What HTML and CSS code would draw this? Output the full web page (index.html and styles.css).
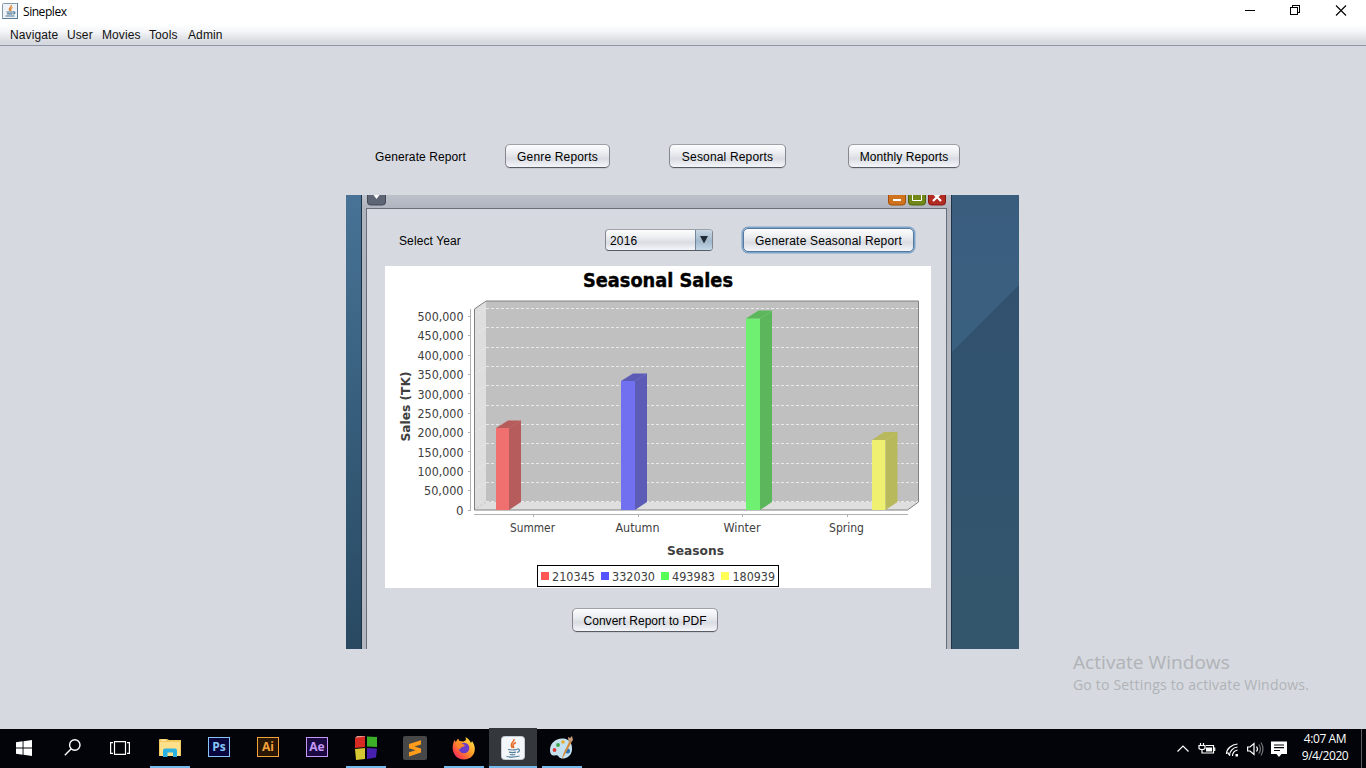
FILE: index.html
```html
<!DOCTYPE html>
<html lang="en">
<head>
<meta charset="utf-8">
<title>Sineplex</title>
<link rel="stylesheet" href="styles.css">
</head>
<body>
<header class="titlebar">
  <svg class="app-icon" width="16" height="16" viewBox="0 0 16 16"><rect x=".5" y=".5" width="15" height="15" rx="1" fill="#eef2f6" stroke="#8099ad"/><path d="M0 15.500h16M15.500 0v16" stroke="#5b7c95"/><path d="M9.400 2C10 4 6 4.700 7.600 7.800M10.500 4.500C8.500 5.500 8.200 6 9 8" fill="none" stroke="#e08030" stroke-width="1.300"/><path d="M4.500 9h6.500M5 10.800h5.500M3.500 13h9M11 9c2.500-.5 2.500 1.500 0 2" fill="none" stroke="#4f7896" stroke-width="1.200"/></svg>
  <span class="app-name">Sineplex</span>
  <svg class="win-ctl" width="106" height="12" viewBox="1243 5 106 12" fill="none" stroke="#000"><path d="M1245 10.500h10M1290.500 7.500h7v7h-7zM1292.500 7.500v-2h7v7h-2" shape-rendering="crispEdges"/><path d="M1336 5.500l10 10M1346 5.500l-10 10" stroke-width="1.100"/></svg>
</header>
<nav class="menubar">
  <span class="m1">Navigate</span><span class="m2">User</span><span class="m3">Movies</span><span class="m4">Tools</span><span class="m5">Admin</span>
</nav>
<main class="content">
  <div class="report-row">
    <span class="label">Generate Report</span>
    <button class="btn genre">Genre Reports</button>
    <button class="btn sesonal">Sesonal Reports</button>
    <button class="btn monthly">Monthly Reports</button>
  </div>
  <section class="desktop">
    <svg class="wall" width="15" height="454"><defs><linearGradient id="lw" x2="0" y2="1"><stop offset="0" stop-color="#487396"/><stop offset=".5" stop-color="#365d7b"/><stop offset="1" stop-color="#294961"/></linearGradient></defs><rect width="15" height="454" fill="url(#lw)"/></svg>
    <div class="frame">
      <div class="frame-title">
        <svg width="20" height="11" viewBox="0 0 20 11"><path d="M.5-2V7a3 3 0 0 0 3 3h12a3 3 0 0 0 3-3V-2z" fill="#5e6676" stroke="#414857"/><path d="M6.500 0h6L9.500 4z" fill="#fff"/></svg>
        <svg class="frame-ctl" width="59" height="11" viewBox="0 0 59 11">
          <path d="M.5-2V7a3 3 0 0 0 3 3h11a3 3 0 0 0 3-3V-2z" fill="#cf731c" stroke="#a64e09"/><path d="M5 5h8" stroke="#fff" stroke-width="2"/>
          <path d="M20.500-2V7a3 3 0 0 0 3 3h11a3 3 0 0 0 3-3V-2z" fill="#718717" stroke="#50650a"/><path d="M24.500-2V5.500h9V-2" fill="none" stroke="#fff"/>
          <path d="M40.500-2V7a3 3 0 0 0 3 3h11a3 3 0 0 0 3-3V-2z" fill="#b22c24" stroke="#871711"/><path d="M45 6l8-8M45-2l8 8" stroke="#fff" stroke-width="2.200"/>
        </svg>
      </div>
      <div class="frame-body">
        <div class="year-row">
          <span class="label year">Select Year</span>
          <div class="combo"><span class="combo-val">2016</span><span class="combo-arrow"><svg width="8" height="8"><path d="M0 0h8L4 7.500z" fill="#222a33"/></svg></span></div>
          <button class="btn focus seasonal">Generate Seasonal Report</button>
        </div>
        <svg class="chart" width="546" height="322" viewBox="385 266 546 322">
          <rect x="385" y="266" width="546" height="322" fill="#fff"/>
          <text class="c-title" x="583" y="287" textLength="150" lengthAdjust="spacingAndGlyphs">Seasonal Sales</text>
          <path d="M474 309l12-8v201l-12 8zM474 510l12-8h433l-11.500 8z" fill="#dedede"/>
          <path d="M486 301h433v201H486z" fill="#c0c0c0"/>
          <path d="M474 510l12-8" stroke="#c0c0c0" stroke-dasharray="2 2"/>
          <path class="grid" d="M486 308.500h433M486 327.500h433M486 347.500h433M486 366.500h433M486 385.500h433M486 405.500h433M486 424.500h433M486 443.500h433M486 463.500h433M486 482.500h433M486 501.500h433"/>
          <path class="grid" d="M474 316.500l12-8M474 335.500l12-8M474 355.500l12-8M474 374.500l12-8M474 393.500l12-8M474 413.500l12-8M474 432.500l12-8M474 451.500l12-8M474 471.500l12-8M474 490.500l12-8"/>
          <path d="M474.500 510V309l11.500-8h432.500V502l-11 8z" fill="none" stroke="#808080"/>
          <g><path fill="#f07070" d="M496 428h13v82h-13z"/><path fill="#b75c5c" d="M496 428l12-7.500h13V502l-12 8v-82z"/><path d="M509 428l12-7.500" stroke="#c56b6b" stroke-width=".6"/></g>
          <g><path fill="#7070f0" d="M621 381h14v129h-14z"/><path fill="#5c5cb7" d="M621 381l12-7.500h14V502l-12 8V381z"/><path d="M635 381l12-7.500" stroke="#7474c5" stroke-width=".6"/></g>
          <g><path fill="#70f070" d="M746 318.500h14V510h-14z"/><path fill="#5cb75c" d="M746 318.500l12.500-8H772V502l-12 8V318.500z"/><path d="M760 318.500l12-8" stroke="#78c578" stroke-width=".6"/></g>
          <g><path fill="#f0f070" d="M872 440h13.500v70H872z"/><path fill="#b8b85c" d="M872 440l12-8h13.500v70l-12 8v-70z"/><path d="M885.500 440l12-8" stroke="#c3c372" stroke-width=".6"/></g>
          <path d="M470.500 309v201.500M468 316.500h3M468 335.500h3M468 355.500h3M468 374.500h3M468 393.500h3M468 413.500h3M468 432.500h3M468 451.500h3M468 471.500h3M468 490.500h3M468 510.500h3M474 514.500h434M533.500 514v3M638.500 514v3M742.500 514v3M847.500 514v3" fill="none" stroke="#b0b0b0"/>
          <g class="c-tick c-num">
            <text x="417.500" y="321" textLength="46" lengthAdjust="spacingAndGlyphs">500,000</text><text x="417.500" y="340" textLength="46" lengthAdjust="spacingAndGlyphs">450,000</text><text x="417.500" y="360" textLength="46" lengthAdjust="spacingAndGlyphs">400,000</text><text x="417.500" y="379" textLength="46" lengthAdjust="spacingAndGlyphs">350,000</text><text x="417.500" y="399" textLength="46" lengthAdjust="spacingAndGlyphs">300,000</text><text x="417.500" y="418" textLength="46" lengthAdjust="spacingAndGlyphs">250,000</text><text x="417.500" y="437" textLength="46" lengthAdjust="spacingAndGlyphs">200,000</text><text x="417.500" y="457" textLength="46" lengthAdjust="spacingAndGlyphs">150,000</text><text x="417.500" y="476" textLength="46" lengthAdjust="spacingAndGlyphs">100,000</text><text x="424" y="495" textLength="39.500" lengthAdjust="spacingAndGlyphs">50,000</text><text x="456" y="515" textLength="7.500" lengthAdjust="spacingAndGlyphs">0</text>
          </g>
          <g class="c-tick">
            <text x="510" y="532" textLength="45" lengthAdjust="spacingAndGlyphs">Summer</text><text x="615.500" y="532" textLength="44" lengthAdjust="spacingAndGlyphs">Autumn</text><text x="723.500" y="532" textLength="37" lengthAdjust="spacingAndGlyphs">Winter</text><text x="829" y="532" textLength="35" lengthAdjust="spacingAndGlyphs">Spring</text>
          </g>
          <text class="c-axis" x="667" y="555" textLength="57" lengthAdjust="spacingAndGlyphs">Seasons</text>
          <text class="c-axis" transform="translate(410 441.500) rotate(-90)" textLength="70" lengthAdjust="spacingAndGlyphs">Sales (TK)</text>
          <rect x="537.500" y="565.500" width="241" height="21" fill="#fff" stroke="#000"/>
          <path fill="#ff5555" d="M541 572h8v8h-8z"/><path fill="#5555ff" d="M601 572h8v8h-8z"/><path fill="#55ff55" d="M661 572h8v8h-8z"/><path fill="#ffff55" d="M721 572h8v8h-8z"/>
          <g class="c-tick c-num"><text x="552" y="581" textLength="43" lengthAdjust="spacingAndGlyphs">210345</text><text x="612" y="581" textLength="43" lengthAdjust="spacingAndGlyphs">332030</text><text x="672" y="581" textLength="43" lengthAdjust="spacingAndGlyphs">493983</text><text x="732.500" y="581" textLength="42.500" lengthAdjust="spacingAndGlyphs">180939</text></g>
        </svg>
        <button class="btn convert">Convert Report to PDF</button>
      </div>
    </div>
    <svg class="wall" width="67" height="454"><defs><linearGradient id="rw" x2="0" y2="1"><stop offset="0" stop-color="#3a5d7e"/><stop offset=".35" stop-color="#3a607f"/><stop offset="1" stop-color="#34566f"/></linearGradient><linearGradient id="rd" x2="0" y2="1"><stop offset="0" stop-color="#31516f"/><stop offset="1" stop-color="#34566c"/></linearGradient></defs><rect width="67" height="454" fill="url(#rw)"/><path d="M0 157L67 90v364H0z" fill="url(#rd)"/></svg>
  </section>
  <aside class="activate"><div class="act-1">Activate Windows</div><div class="act-2">Go to Settings to activate Windows.</div></aside>
</main>
<footer class="taskbar">
  <div class="task"><svg width="16" height="16" fill="#fff"><path d="M0 2.300l6.600-1v6.200H0zM7.500 1.200L16 0v7.500H7.500zM0 8.400h6.600v6.300L0 13.700zM7.500 8.400H16V16l-8.500-1.200z"/></svg></div>
  <div class="task"><svg width="17" height="17" fill="none" stroke="#fff" stroke-width="1.400"><circle cx="10.800" cy="6" r="5.200"/><path d="M7 10L.8 16.200"/></svg></div>
  <div class="task view"><svg width="20" height="14" fill="none" stroke="#fff" stroke-width="1.200"><path d="M4.500.6h11v12.800h-11zM3 1.600H.6v10.800H3M17 1.600h2.400v10.800H17"/></svg></div>
  <div class="task open explorer"><svg width="22" height="19" viewBox="0 0 22 19"><path d="M0 1q0-1 1-1h7l2 1h12v16H0z" fill="#efc95d"/><path d="M1 3h20v14H1z" fill="#ffe08a"/><path d="M2 1.200h5" stroke="#fff6d0"/><path d="M4 18V11.500q0-2 2-2h10q2 0 2 2V18h-4v-4.500H8.500V18z" fill="#29b2e2"/></svg></div>
  <div class="task"><span class="adobe ps">Ps</span></div>
  <div class="task"><span class="adobe ai">Ai</span></div>
  <div class="task"><span class="adobe ae">Ae</span></div>
  <div class="task open"><svg width="22" height="24" viewBox="0 0 22 24"><path d="M0 2l10-2v11L0 12z" fill="#d72b22"/><path d="M0 2l2-2h8v.5z" fill="#f0968a"/><path d="M12 .5L22 1v10l-10-.5z" fill="#3cae28"/><path d="M0 13l10-1v11L1 24z" fill="#d6c832"/><path d="M12 12l10 .5-1 9L12 23z" fill="#4820ae"/></svg></div>
  <div class="task"><svg width="24" height="24" viewBox="0 0 24 24"><rect width="24" height="24" rx="2" fill="#474747"/><path d="M6 8L18 4.300v4.200l-6.500 2L18 12.600v4L6 20.500v-4.200l6.500-2L6 12.200z" fill="#ff9c1b"/></svg></div>
  <div class="task open"><svg width="24" height="24" viewBox="0 0 24 24"><defs><linearGradient id="ff" x1="1" x2="0" y2="1"><stop offset="0" stop-color="#fff44f"/><stop offset=".45" stop-color="#ff9b27"/><stop offset=".75" stop-color="#ff4a45"/><stop offset="1" stop-color="#e31587"/></linearGradient></defs><path d="M2.500 4l1.300 2L6 2.500 7.500 5l4 .5L14 4l-.5-3C17 3 18 5 19 7l1-2c6 8 2 18.500-8 18.500S-2 13 2.500 4z" fill="url(#ff)"/><circle cx="12" cy="12" r="5.300" fill="#6b3bcb"/><path d="M4 7c3-1.500 6 .5 8 1.500l1 1.500-4 1.500c-1 2-2 2-4 0z" fill="#ff852d"/></svg></div>
  <div class="task open active"><svg width="24" height="24" viewBox="0 0 24 24"><rect x=".5" y=".5" width="23" height="23" rx="3" fill="#f4f7f9" stroke="#c5ced6"/><path d="M13 3C14 6 7.500 7 11.500 12M15 6.500c-3.500 1.500-3.500 3-2 5.500" fill="none" stroke="#e86a27" stroke-width="1.500"/><path d="M7 13.500q4 1 9 0M8 16.200q3.500.8 7 0M8.800 18.500q3 .7 5.500 0M5.500 20.500q6.500 1.400 13-.5M16 13c3.500-.5 3 3 0 3.500" fill="none" stroke="#517d9d" stroke-width="1.200"/></svg></div>
  <div class="task open"><svg width="24" height="24" viewBox="0 0 24 24"><path d="M14 2.500C6 1.500 0 7 0 14c0 5 3 6 5 5.500s3 0 4 1.500c2 3 12 2 13-7 .5-6-2-10.500-8-11.500z" fill="#c5e1ef"/><circle cx="4.500" cy="14" r="1.900" fill="#d73d35"/><circle cx="8" cy="9" r="1.900" fill="#38a547"/><circle cx="13" cy="6" r="1.800" fill="#e9ac2b"/><circle cx="17.500" cy="15" r="2.500" fill="#2b74b8"/><path d="M11.500 23.500l2-6L19.500 5l2 1.200-6.500 12z" fill="#d68a37"/><path d="M18.500 5.500L18 1l2 1 2-2 1 4-1.500 2z" fill="#c59a77"/></svg></div>
  <div class="tray">
    <svg width="112" height="18" viewBox="1176 739 112 18" fill="none" stroke="#fff" stroke-width="1.200">
      <path d="M1177.500 750.500l5.500-5.500 5.500 5.500"/>
      <path d="M1200.500 742v2.500M1203.500 742v2.500M1199 744.500h6v2.500q0 1.500-3 1.500t-3-1.500zM1202 748v4h2M1206 744.500h7.500v7.500h-10"/><path d="M1206 746.500h6v4h-6z" fill="#fff" stroke="none"/><path d="M1214.700 746.500v3.500"/>
      <path d="M1226.500 753c0-5 5-9.500 11-10M1229.500 754.500c0-4 3.500-8 8-8.500M1232.500 755c0-3 2-5.200 5-6" /><path d="M1235.500 753h2.500v2.500h-2.500z" fill="#fff" stroke="none"/><path d="M1227.500 751.500l2.500 3"/>
      <path d="M1247.600 746h2.400l4-3.500v11l-4-3.500h-2.400z"/><path d="M1256.500 745.500q2 2.500 0 5"/><path d="M1258.800 743.500q3.200 4.500 0 9M1261 741.500q4 6.500 0 13" stroke="#777"/>
      <path d="M1271 740.500h16v12.500h-5.500l-2.500 3-2.500-3H1271z" fill="#fff" stroke="none"/><path d="M1274 744h10M1274 746.700h10M1274 749.500h6" stroke="#050508"/>
    </svg>
    <div class="clock"><div>4:07 AM</div><div class="date">9/4/2020</div></div>
    <span class="peek"></span>
  </div>
</footer>
</body>
</html>
```
FILE: styles.css
```css
* { box-sizing: border-box; }
body {
  margin: 0;
  width: 1366px;
  height: 768px;
  overflow: hidden;
  display: flex;
  flex-direction: column;
  background: #d6d9df;
  font-family: "Liberation Sans", Arial, sans-serif;
  font-size: 12px;
  color: #000;
}
svg { display: block; flex: none; }
.titlebar {
  height: 24px;
  flex: none;
  display: flex;
  align-items: flex-start;
  background: #fff;
  padding: 3px 17px 0 2px;
}
.app-name {
  font: 12px/17px "Open Sans", "Noto Sans", sans-serif;
  margin-left: 5px;
  letter-spacing: -0.45px;
}
.win-ctl { margin: 2px 0 0 auto; }
.menubar {
  height: 22px;
  flex: none;
  background: linear-gradient(#fff 0, #f5f6f8 35%, #d6d9df 85%);
  border-bottom: 1px solid #8e95a5;
  padding-left: 10px;
  display: flex;
  line-height: 22px;
}
.menubar span { letter-spacing: 0.1px; color: #111; white-space: nowrap; }
.m1 { width: 57px; }
.m2 { width: 35px; }
.m3 { width: 47px; }
.m4 { width: 39px; }
.content {
  flex: 1;
  display: flex;
  flex-direction: column;
  padding-top: 98px;
}
.report-row { display: flex; align-items: center; height: 24px; padding-left: 375px; flex: none; }
.label { width: 130px; letter-spacing: 0.1px; padding-top: 2px; }
.btn {
  height: 24px;
  flex: none;
  border: 1px solid;
  border-color: #9ea1a8 #84878f #575b64;
  border-radius: 5px;
  background: linear-gradient(#fdfdfe 0, #eceef1 35%, #d9dce2 62%, #f4f6fa 100%);
  font: 12px "Liberation Sans", Arial, sans-serif;
  letter-spacing: 0.17px;
  color: #000;
  padding: 2px 0 0;
  white-space: nowrap;
  box-shadow: 0 1px 0 #c6c9ce;
}
.genre { width: 105px; }
.sesonal { width: 117px; margin-left: 59px; }
.monthly { width: 112px; margin-left: 62px; letter-spacing: 0.08px; }
.desktop { display: flex; flex: none; width: 673px; height: 454px; margin: 27px 0 0 346px; overflow: hidden; }
.frame {
  width: 591px;
  height: 454px;
  display: flex;
  flex-direction: column;
  background: linear-gradient(#bdc1ca, #b0b4be 13px, #b4b8c1);
  border-left: 1px solid #1e3345;
  border-right: 1px solid #1e3345;
  padding: 0 4px;
}
.frame-title { height: 13px; flex: none; display: flex; justify-content: space-between; padding: 0 0 0 1px; }
.frame-body {
  flex: 1;
  background: #d6d9df;
  border: solid #686d78;
  border-width: 1px 1px 0;
  padding: 19px 0 0 18px;
}
.year-row { display: flex; align-items: center; height: 24px; padding-left: 14px; }
.year { width: 206px; }
.combo {
  width: 108px;
  height: 22px;
  display: flex;
  border: 1px solid;
  border-color: #9ea1a8 #84878f #575b64;
  border-radius: 4px;
  overflow: hidden;
  background: linear-gradient(#fdfdfe 0, #eceef1 35%, #d9dce2 62%, #f4f6fa 100%);
}
.combo-val { flex: 1; padding-left: 4px; line-height: 22px; letter-spacing: 0.2px; }
.combo-arrow {
  width: 17px;
  display: flex;
  align-items: center;
  justify-content: center;
  border-left: 1px solid #73869a;
  background: linear-gradient(#c9d8e5, #a1b8cc 55%, #c1d7e7);
}
.seasonal { width: 171px; margin-left: 30px; }
.focus { border-color: #55799c; box-shadow: 0 0 0 1.5px #7da5cb; }
.chart { margin-top: 14px; }
.convert { display: block; width: 146px; margin: 20px 0 0 187px; letter-spacing: 0.05px; }
.c-title { font: bold 20px "DejaVu Sans Condensed", "DejaVu Sans", sans-serif; stroke: #000; stroke-width: 0.4px; }
.c-tick { font: 12px "DejaVu Sans Condensed", "DejaVu Sans", sans-serif; fill: #404040; }
.c-num { font: 12px "DejaVu Sans", sans-serif; }
.c-axis { font: bold 13px "DejaVu Sans Condensed", "DejaVu Sans", sans-serif; fill: #404040; }
.grid { fill: none; stroke: #e9e9e9; stroke-dasharray: 3 2; }
.activate { margin-left: 1073px; margin-top: 1px; font-family: "Open Sans", "Noto Sans", sans-serif; color: #b0b3b7; white-space: nowrap; }
.act-1 { font-size: 19px; line-height: 25px; letter-spacing: 0.05px; }
.act-2 { font-size: 14px; line-height: 20px; letter-spacing: 0.19px; }
.taskbar { height: 39px; flex: none; background: #020409; display: flex; }
.task { width: 48px; height: 39px; margin-right: 1px; padding-bottom: 2px; display: flex; align-items: center; justify-content: center; flex: none; }
.task:nth-child(-n+2) { margin-right: 0; }
.view { margin-right: 2px; }
.open { background: linear-gradient(#76b9ed, #76b9ed) center bottom / 40px 2px no-repeat; }
.explorer { padding-bottom: 1px; }
.active { height: 40px; margin-top: -1px; padding-bottom: 1px; background: linear-gradient(#76b9ed, #76b9ed) center bottom / 48px 2px no-repeat #34373b; }
.adobe { width: 22px; height: 20px; margin-bottom: 2px; border: 1px solid; text-align: center; font: bold 12px/17px "Open Sans", sans-serif; }
.ps { background: #08063c; color: #86c5f5; }
.ai { background: #2a1703; color: #f5a13a; }
.ae { background: #1b0a42; color: #c698f5; }
.tray { margin-left: auto; display: flex; align-items: center; color: #fff; }
.clock { width: 64px; margin-left: 5px; padding-bottom: 3px; text-align: center; font: 12px/17px "Open Sans", "Noto Sans", sans-serif; letter-spacing: -0.42px; white-space: nowrap; }
.peek { width: 1px; height: 39px; background: #5b5d61; margin: 0 4px 0 4px; }
```
